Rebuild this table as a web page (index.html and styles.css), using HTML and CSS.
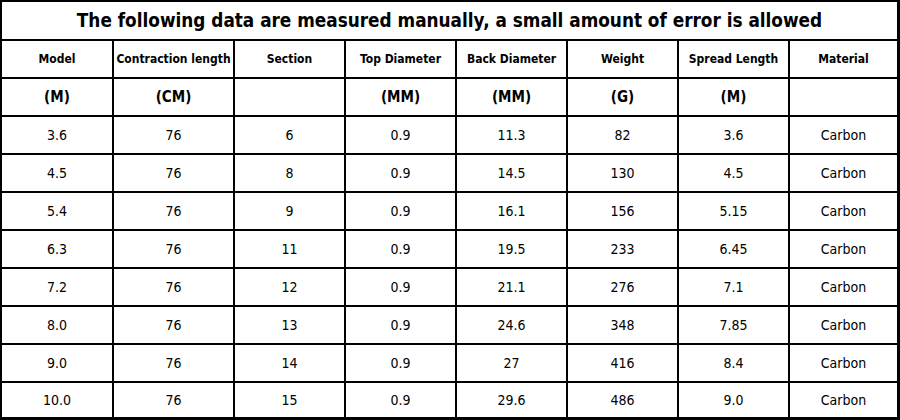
FILE: index.html
```html
<!DOCTYPE html>
<html>
<head>
<meta charset="utf-8">
<link rel="stylesheet" href="styles.css">
</head>
<body>
<div class="sheet">
  <div class="cell title">The following data are measured manually, a small amount of error is allowed</div>

  <div class="cell head">Model</div>
  <div class="cell head">Contraction length</div>
  <div class="cell head">Section</div>
  <div class="cell head">Top Diameter</div>
  <div class="cell head">Back Diameter</div>
  <div class="cell head">Weight</div>
  <div class="cell head">Spread Length</div>
  <div class="cell head">Material</div>

  <div class="cell unit">(M)</div>
  <div class="cell unit">(CM)</div>
  <div class="cell unit"></div>
  <div class="cell unit">(MM)</div>
  <div class="cell unit">(MM)</div>
  <div class="cell unit">(G)</div>
  <div class="cell unit">(M)</div>
  <div class="cell unit"></div>

  <div class="cell">3.6</div><div class="cell">76</div><div class="cell">6</div><div class="cell">0.9</div><div class="cell">11.3</div><div class="cell">82</div><div class="cell">3.6</div><div class="cell">Carbon</div>
  <div class="cell">4.5</div><div class="cell">76</div><div class="cell">8</div><div class="cell">0.9</div><div class="cell">14.5</div><div class="cell">130</div><div class="cell">4.5</div><div class="cell">Carbon</div>
  <div class="cell">5.4</div><div class="cell">76</div><div class="cell">9</div><div class="cell">0.9</div><div class="cell">16.1</div><div class="cell">156</div><div class="cell">5.15</div><div class="cell">Carbon</div>
  <div class="cell">6.3</div><div class="cell">76</div><div class="cell">11</div><div class="cell">0.9</div><div class="cell">19.5</div><div class="cell">233</div><div class="cell">6.45</div><div class="cell">Carbon</div>
  <div class="cell">7.2</div><div class="cell">76</div><div class="cell">12</div><div class="cell">0.9</div><div class="cell">21.1</div><div class="cell">276</div><div class="cell">7.1</div><div class="cell">Carbon</div>
  <div class="cell">8.0</div><div class="cell">76</div><div class="cell">13</div><div class="cell">0.9</div><div class="cell">24.6</div><div class="cell">348</div><div class="cell">7.85</div><div class="cell">Carbon</div>
  <div class="cell">9.0</div><div class="cell">76</div><div class="cell">14</div><div class="cell">0.9</div><div class="cell">27</div><div class="cell">416</div><div class="cell">8.4</div><div class="cell">Carbon</div>
  <div class="cell">10.0</div><div class="cell">76</div><div class="cell">15</div><div class="cell">0.9</div><div class="cell">29.6</div><div class="cell">486</div><div class="cell">9.0</div><div class="cell">Carbon</div>
</div>
</body>
</html>
```

FILE: styles.css
```css
html, body {
  margin: 0;
  padding: 0;
  background: #fff;
}

.sheet {
  box-sizing: border-box;
  width: 900px;
  height: 420px;
  border: 3px solid #000;
  border-top-width: 2px;
  border-left-width: 2px;
  background: #000;
  display: grid;
  grid-template-columns: 110px 119px 109px 109px 109px 109px 109px 107px;
  grid-template-rows: 37px 36px 36px repeat(7, 36px) 34px;
  gap: 2px;
  font-family: "DejaVu Sans Condensed", "DejaVu Sans", sans-serif;
  color: #000;
}

.cell {
  background: #fff;
  display: flex;
  align-items: center;
  justify-content: center;
  font-size: 14px;
  white-space: nowrap;
  overflow: hidden;
}

.title {
  grid-column: 1 / -1;
  font-size: 18.8px;
  font-weight: bold;
}

.head {
  font-size: 12px;
  font-weight: bold;
}

.unit {
  font-size: 15px;
  font-weight: bold;
}
```
